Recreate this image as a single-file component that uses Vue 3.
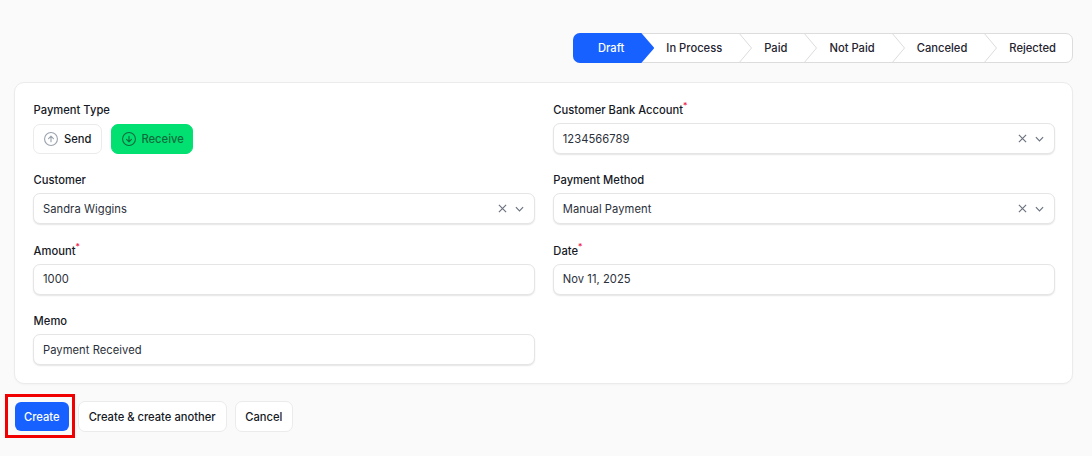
<script setup>
const steps = [
  { label: 'Draft', active: true },
  { label: 'In Process' },
  { label: 'Paid' },
  { label: 'Not Paid' },
  { label: 'Canceled' },
  { label: 'Rejected' },
]
</script>

<template>
  <div class="page">
    <div class="stepper-row">
      <ol class="stepper">
        <li v-for="(s, i) in steps" :key="s.label" class="step" :class="{ active: s.active, last: i === steps.length - 1 }">
          <span>{{ s.label }}</span>
          <svg v-if="i > 0 && i < steps.length - 1" class="chev" width="14" height="30" viewBox="0 0 14 30" fill="none">
            <path d="M0.5 -0.5 L13.5 15 L0.5 30.5" stroke="#dcdcdc" stroke-width="1" />
          </svg>
        </li>
      </ol>
    </div>

    <section class="card">
      <div class="grid">
        <div class="field">
          <label class="label">Payment Type</label>
          <div class="toggles">
            <button class="toggle">
              <svg class="ticon" viewBox="2 2 20 20" fill="none" stroke="#9ca3af" stroke-width="1.6" stroke-linecap="round" stroke-linejoin="round">
                <circle cx="12" cy="12" r="9.2" />
                <path d="M8.5 11.5 12 8l3.5 3.5M12 8.2V16" />
              </svg>
              Send
            </button>
            <button class="toggle on">
              <svg class="ticon" viewBox="2 2 20 20" fill="none" stroke="#0c6b3c" stroke-width="1.6" stroke-linecap="round" stroke-linejoin="round">
                <circle cx="12" cy="12" r="9.2" />
                <path d="M8.5 12.5 12 16l3.5-3.5M12 15.8V8" />
              </svg>
              Receive
            </button>
          </div>
        </div>

        <div class="field">
          <label class="label">Customer Bank Account<sup class="req">*</sup></label>
          <div class="input">
            <span class="val">1234566789</span>
            <svg class="x" viewBox="0 0 10 10" width="9" height="9"><path d="M1 1l8 8M9 1l-8 8" stroke="#6b7280" stroke-width="1.3" fill="none" /></svg>
            <svg class="c" viewBox="0 0 10 6" width="9" height="6"><path d="M1 1l4 4 4-4" stroke="#6b7280" stroke-width="1.3" fill="none" /></svg>
          </div>
        </div>

        <div class="field">
          <label class="label">Customer</label>
          <div class="input">
            <span class="val">Sandra Wiggins</span>
            <svg class="x" viewBox="0 0 10 10" width="9" height="9"><path d="M1 1l8 8M9 1l-8 8" stroke="#6b7280" stroke-width="1.3" fill="none" /></svg>
            <svg class="c" viewBox="0 0 10 6" width="9" height="6"><path d="M1 1l4 4 4-4" stroke="#6b7280" stroke-width="1.3" fill="none" /></svg>
          </div>
        </div>

        <div class="field">
          <label class="label">Payment Method</label>
          <div class="input">
            <span class="val">Manual Payment</span>
            <svg class="x" viewBox="0 0 10 10" width="9" height="9"><path d="M1 1l8 8M9 1l-8 8" stroke="#6b7280" stroke-width="1.3" fill="none" /></svg>
            <svg class="c" viewBox="0 0 10 6" width="9" height="6"><path d="M1 1l4 4 4-4" stroke="#6b7280" stroke-width="1.3" fill="none" /></svg>
          </div>
        </div>

        <div class="field">
          <label class="label">Amount<sup class="req">*</sup></label>
          <div class="input"><span class="val">1000</span></div>
        </div>

        <div class="field">
          <label class="label">Date<sup class="req">*</sup></label>
          <div class="input"><span class="val">Nov 11, 2025</span></div>
        </div>

        <div class="field">
          <label class="label">Memo</label>
          <div class="input"><span class="val">Payment Received</span></div>
        </div>
      </div>
    </section>

    <div class="actions">
      <div class="highlight"></div>
      <button class="btn primary">Create</button>
      <button class="btn">Create &amp; create another</button>
      <button class="btn cancel">Cancel</button>
    </div>
  </div>
</template>

<style>
html, body { margin: 0; background: #fafafa; }
</style>

<style scoped>
.page {
  width: 1092px;
  height: 456px;
  box-sizing: border-box;
  padding: 33px 19px 0 14px;
  background: #fafafa;
  font-family: Inter, "Liberation Sans", sans-serif;
  font-size: 11.2px;
  color: #111827;
  overflow: hidden;
}
.stepper-row { display: flex; justify-content: flex-end; }
.stepper {
  display: flex;
  margin: 0;
  padding: 0;
  list-style: none;
  height: 28px;
  border: 1px solid #dcdcdc;
  border-radius: 7px;
  background: #fff;
  font-weight: 500;
}
.step {
  position: relative;
  display: flex;
  align-items: center;
  padding: 0 30px 0 12px;
  white-space: nowrap;
  color: #1f2430;
}
.step.last { padding-right: 16px; }
.step.active {
  margin: -1px 0 -1px -1px;
  padding-left: 25px;
  background: #1661ff;
  color: #fff;
  border-radius: 7px 0 0 7px;
  clip-path: polygon(0 0, calc(100% - 13px) 0, 100% 50%, calc(100% - 13px) 100%, 0 100%);
}
.chev { position: absolute; right: 0; top: -1px; }

.card {
  box-sizing: border-box;
  height: 302px;
  margin-top: 19px;
  padding: 19px 17.5px 19px 18px;
  background: #fff;
  border: 1px solid #ebebeb;
  border-radius: 10px;
  box-shadow: 0 1px 2px rgba(0, 0, 0, 0.03);
}
.grid {
  display: grid;
  grid-template-columns: 1fr 1fr;
  column-gap: 18px;
  row-gap: 18.4px;
}
.field { display: flex; flex-direction: column; gap: 5px; }
.label {
  display: block;
  height: 16px;
  padding-left: 0.6px;
  line-height: 17px;
  font-weight: 500;
  color: #16191f;
}
.req {
  color: #ef1b4a;
  font-size: 8.5px;
  line-height: 0;
  vertical-align: 5px;
}
.toggles { display: flex; gap: 9px; }
.toggle {
  display: flex;
  align-items: center;
  gap: 6px;
  height: 30px;
  margin-top: 1px;
  box-sizing: border-box;
  padding: 0 10px;
  border: 1px solid #ebebeb;
  border-radius: 7px;
  background: #fff;
  font: inherit;
  font-weight: 500;
  color: #16191f;
}
.toggle.on {
  gap: 5px;
  padding-right: 8px;
  background: #03e072;
  border-color: #03e072;
  color: #0c6b3c;
}
.ticon { width: 14px; height: 14px; flex: none; }
.input {
  display: flex;
  align-items: center;
  height: 31px;
  box-sizing: border-box;
  padding: 0 10px 0 9px;
  background: #fff;
  border: 1px solid #e5e5e5;
  border-radius: 7px;
  box-shadow: 0 1px 1.5px rgba(0, 0, 0, 0.1);
}
.val { flex: 1; color: #2b303a; letter-spacing: 0.05px; }
.c { margin-left: 8px; }

.actions {
  position: relative;
  display: flex;
  gap: 8px;
  margin-top: 17px;
}
.highlight {
  position: absolute;
  left: -9px;
  top: -7px;
  width: 70px;
  height: 44px;
  box-sizing: border-box;
  border: 3px solid #f00000;
}
.btn {
  position: relative;
  height: 31px;
  box-sizing: border-box;
  padding: 0 10px;
  border: 1px solid #ebebeb;
  border-radius: 7px;
  background: #fff;
  font: inherit;
  font-weight: 500;
  color: #16191f;
}
.btn.cancel { padding: 0 9.5px; }
.btn.primary {
  padding: 0 9px;
  background: #1661ff padding-box;
  border-color: transparent;
  color: #fff;
}
</style>
